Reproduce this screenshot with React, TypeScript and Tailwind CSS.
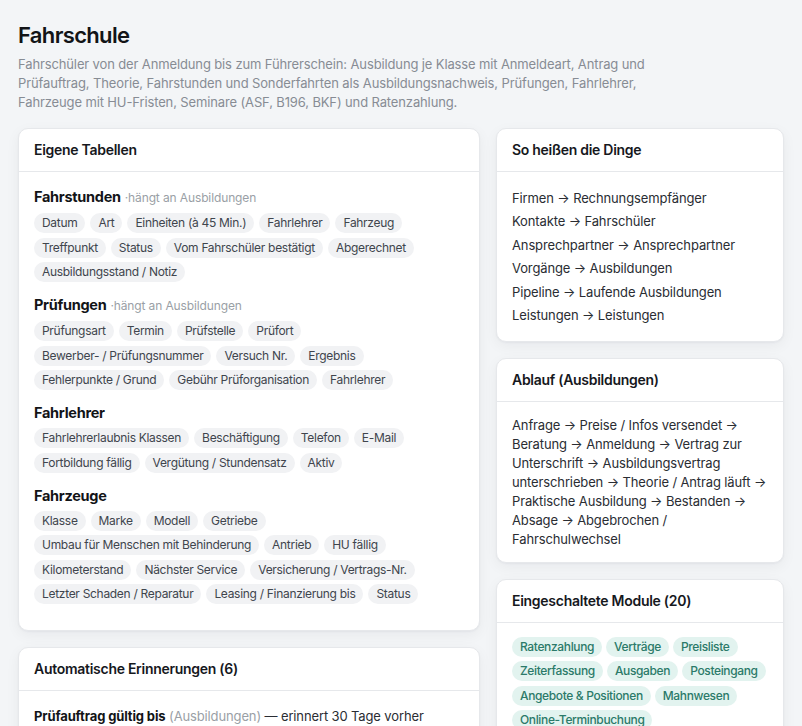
const tables = [
  {
    name: 'Fahrstunden',
    parent: 'Ausbildungen',
    fields: [
      'Datum',
      'Art',
      'Einheiten (à 45 Min.)',
      'Fahrlehrer',
      'Fahrzeug',
      'Treffpunkt',
      'Status',
      'Vom Fahrschüler bestätigt',
      'Abgerechnet',
      'Ausbildungsstand / Notiz',
    ],
  },
  {
    name: 'Prüfungen',
    parent: 'Ausbildungen',
    fields: [
      'Prüfungsart',
      'Termin',
      'Prüfstelle',
      'Prüfort',
      'Bewerber- / Prüfungsnummer',
      'Versuch Nr.',
      'Ergebnis',
      'Fehlerpunkte / Grund',
      'Gebühr Prüforganisation',
      'Fahrlehrer',
    ],
  },
  {
    name: 'Fahrlehrer',
    fields: [
      'Fahrlehrerlaubnis Klassen',
      'Beschäftigung',
      'Telefon',
      'E-Mail',
      'Fortbildung fällig',
      'Vergütung / Stundensatz',
      'Aktiv',
    ],
  },
  {
    name: 'Fahrzeuge',
    fields: [
      'Klasse',
      'Marke',
      'Modell',
      'Getriebe',
      'Umbau für Menschen mit Behinderung',
      'Antrieb',
      'HU fällig',
      'Kilometerstand',
      'Nächster Service',
      'Versicherung / Vertrags-Nr.',
      'Letzter Schaden / Reparatur',
      'Leasing / Finanzierung bis',
      'Status',
    ],
  },
];

const names = [
  ['Firmen', 'Rechnungsempfänger'],
  ['Kontakte', 'Fahrschüler'],
  ['Ansprechpartner', 'Ansprechpartner'],
  ['Vorgänge', 'Ausbildungen'],
  ['Pipeline', 'Laufende Ausbildungen'],
  ['Leistungen', 'Leistungen'],
];

const stages = [
  'Anfrage',
  'Preise / Infos versendet',
  'Beratung',
  'Anmeldung',
  'Vertrag zur Unterschrift',
  'Ausbildungsvertrag unterschrieben',
  'Theorie / Antrag läuft',
  'Praktische Ausbildung',
  'Bestanden',
  'Absage',
  'Abgebrochen / Fahrschulwechsel',
];

const modules = [
  'Ratenzahlung',
  'Verträge',
  'Preisliste',
  'Zeiterfassung',
  'Ausgaben',
  'Posteingang',
  'Angebote & Positionen',
  'Mahnwesen',
  'Online-Terminbuchung',
];

function Card({ title, children, bodyClass = 'p-[15px]' }: { title: string; children: React.ReactNode; bodyClass?: string }) {
  return (
    <div className="rounded-[10px] border border-[#e6e8eb] bg-white shadow-[0_1px_2px_rgba(16,24,40,0.04),0_4px_14px_rgba(16,24,40,0.05)]">
      <div className="border-b border-[#e6e8eb] px-[15px] py-[11px] text-[14px] font-semibold leading-5 tracking-[-0.02em] text-[#16181d]">
        {title}
      </div>
      <div className={bodyClass}>{children}</div>
    </div>
  );
}

function Chip({ label, tone = 'gray' }: { label: string; tone?: 'gray' | 'green' }) {
  const cls =
    tone === 'green'
      ? 'bg-[#e2f3ef] text-[#2b7a69] font-medium tracking-[-0.03em]'
      : 'bg-[#f1f2f4] text-[#40454d] tracking-[-0.025em]';
  return <span className={`rounded-full px-2 py-0.5 text-[12px] leading-4 ${cls}`}>{label}</span>;
}

export default function App() {
  return (
    <div className="min-h-screen bg-[#f3f5f7] px-[18px] pt-[19px] pb-8 font-['Inter',sans-serif]">
      <h1 className="text-[22px] font-semibold leading-8 tracking-[-0.03em] text-[#121417]">Fahrschule</h1>
      <p className="mt-1 max-w-[640px] text-[13px] leading-[19px] tracking-[-0.01em] text-[#878c94]">
        Fahrschüler von der Anmeldung bis zum Führerschein: Ausbildung je Klasse mit Anmeldeart, Antrag und
        Prüfauftrag, Theorie, Fahrstunden und Sonderfahrten als Ausbildungsnachweis, Prüfungen, Fahrlehrer,
        Fahrzeuge mit HU-Fristen, Seminare (ASF, B196, BKF) und Ratenzahlung.
      </p>

      <div className="mt-4 grid grid-cols-[1fr_288px] gap-4">
        <div className="flex flex-col gap-4">
          <Card title="Eigene Tabellen" bodyClass="px-[15px] pt-[15px] pb-[26px]">
            <div className="flex flex-col gap-[13px]">
              {tables.map((t) => (
                <div key={t.name}>
                  <div className="flex items-baseline leading-5">
                    <span className="text-[14.5px] font-bold tracking-[-0.02em] text-[#121417]">{t.name}</span>
                    {t.parent && (
                      <span className="ml-1 text-[12px] tracking-[-0.01em] text-[#9a9fa6]">·hängt an {t.parent}</span>
                    )}
                  </div>
                  <div className="mt-[5px] flex flex-wrap gap-x-[5px] gap-y-[4.5px]">
                    {t.fields.map((f, i) => (
                      <Chip key={i} label={f} />
                    ))}
                  </div>
                </div>
              ))}
            </div>
          </Card>

          <Card title="Automatische Erinnerungen (6)" bodyClass="px-[15px] pt-[15px] pb-[15px]">
            <p className="text-[13px] leading-5 tracking-[-0.01em] text-[#2a2d33]">
              <span className="font-bold text-[#121417]">Prüfauftrag gültig bis</span>{' '}
              <span className="text-[#9a9fa6]">(Ausbildungen)</span> — erinnert 30 Tage vorher
            </p>
          </Card>
        </div>

        <div className="flex flex-col gap-4">
          <Card title="So heißen die Dinge" bodyClass="px-[15px] pt-[16px] pb-[16px]">
            <ul className="flex flex-col gap-[3.4px] text-[13px] leading-5 tracking-[-0.01em] text-[#2a2d33]">
              {names.map(([from, to]) => (
                <li key={from}>
                  {from} → {to}
                </li>
              ))}
            </ul>
          </Card>

          <Card title="Ablauf (Ausbildungen)" bodyClass="px-[15px] pt-[14px] pb-[13px]">
            <p className="text-[13px] leading-[19px] tracking-[-0.01em] text-[#2a2d33]">{stages.join(' → ')}</p>
          </Card>

          <Card title="Eingeschaltete Module (20)" bodyClass="px-[15px] pt-[14px] pb-[15px]">
            <div className="flex flex-wrap gap-x-[4px] gap-y-[4.5px]">
              {modules.map((m) => (
                <Chip key={m} label={m} tone="green" />
              ))}
            </div>
          </Card>
        </div>
      </div>
    </div>
  );
}
